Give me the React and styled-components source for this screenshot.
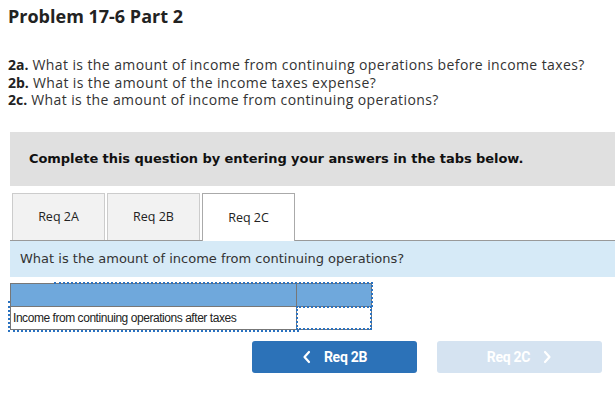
import React from "react";
import styled, { createGlobalStyle } from "styled-components";

const Global = createGlobalStyle`
  body {
    margin: 0;
    background: #fff;
    font-family: "Open Sans", sans-serif;
    color: #222;
  }
`;

const tabs = ["Req 2A", "Req 2B", "Req 2C"];

function App() {
  return (
    <>
      <Global />
      <Page>
        <Title>Problem 17-6 Part 2</Title>
        <Questions>
          <p><b>2a.</b> What is the amount of income from continuing operations before income taxes?</p>
          <p><b>2b.</b> What is the amount of the income taxes expense?</p>
          <p><b>2c.</b> What is the amount of income from continuing operations?</p>
        </Questions>

        <Instructions>Complete this question by entering your answers in the tabs below.</Instructions>

        <TabBar>
          {tabs.map((t) => (
            <Tab key={t} active={t === "Req 2C"}>{t}</Tab>
          ))}
        </TabBar>

        <Prompt>What is the amount of income from continuing operations?</Prompt>

        <Table>
          <HeadRow>
            <HeadCell />
            <HeadCell last />
          </HeadRow>
          <Row>
            <LabelCell>Income from continuing operations after taxes</LabelCell>
            <InputCell />
          </Row>
        </Table>

        <Nav>
          <NavButton>
            <Chevron viewBox="0 0 10 14"><path d="M7 2 L2.5 7 L7 12" /></Chevron>
            Req 2B
          </NavButton>
          <NavButton disabled>
            Req 2C
            <Chevron viewBox="0 0 10 14"><path d="M3 2 L7.5 7 L3 12" /></Chevron>
          </NavButton>
        </Nav>
      </Page>
    </>
  );
}

const Page = styled.div`
  width: 615px;
  padding: 4px 0 0 10px;
  box-sizing: border-box;
`;

const Title = styled.h1`
  margin: 0 0 0 -2px;
  font-size: 18px;
  line-height: 24px;
  font-weight: 700;
  color: #222;
`;

const Questions = styled.div`
  margin-top: 28px;
  margin-left: -2px;
  font-size: 14px;
  line-height: 17.5px;
  letter-spacing: 0.4px;
  color: #333;
  p { margin: 0; }
  b { font-weight: 700; color: #222; letter-spacing: 0; }
`;

const Instructions = styled.div`
  margin-top: 23px;
  height: 54px;
  background: #e0e0e0;
  display: flex;
  align-items: center;
  padding-left: 19px;
  font-family: "DejaVu Sans", Verdana, sans-serif;
  font-size: 13px;
  letter-spacing: -0.06px;
  font-weight: 700;
  color: #111;
`;

const TabBar = styled.div`
  margin-top: 7px;
  display: flex;
  gap: 2px;
  padding-left: 2px;
  border-bottom: 1px solid #999;
  height: 47px;
  align-items: flex-end;
`;

const Tab = styled.div`
  width: 93px;
  box-sizing: border-box;
  display: flex;
  align-items: center;
  justify-content: center;
  border: 1px solid ${(p) => (p.active ? "#aaa" : "#ccc")};
  border-bottom: none;
  background: ${(p) => (p.active ? "#fff" : "#f2f2f2")};
  font-size: 12.5px;
  color: #222;
  margin-bottom: ${(p) => (p.active ? "-1px" : "0")};
  height: ${(p) => (p.active ? "48px" : "47px")};
`;

const Prompt = styled.div`
  height: 36px;
  background: #d6eaf7;
  display: flex;
  align-items: center;
  padding-left: 10px;
  font-family: "DejaVu Sans", Verdana, sans-serif;
  font-size: 13px;
  color: #333;
`;

const Table = styled.div`
  margin-top: 6px;
  width: 362px;
  box-sizing: border-box;
  border: 1px solid #777;
  position: relative;
  &::before {
    content: "";
    position: absolute;
    left: 43px;
    right: -2px;
    top: -2px;
    border-top: 2px dotted #2a72c0;
  }
  &::after {
    content: "";
    position: absolute;
    right: -2px;
    top: -2px;
    height: 25px;
    border-right: 2px dotted #2a72c0;
  }
`;

const HeadRow = styled.div`
  display: grid;
  grid-template-columns: 286px 1fr;
  height: 22px;
  background: #6fa8dc;
`;

const HeadCell = styled.div`
  border-right: ${(p) => (p.last ? "none" : "1px solid #777")};
`;

const Row = styled.div`
  display: grid;
  grid-template-columns: 286px 1fr;
  height: 22px;
  border-top: 1px solid #777;
`;

const LabelCell = styled.div`
  position: relative;
  border-right: 1px solid #777;
  font-family: "Liberation Sans", Arial, sans-serif;
  font-size: 12px;
  letter-spacing: -0.45px;
  color: #222;
  display: flex;
  align-items: center;
  padding-left: 2px;
  &::after {
    content: "";
    position: absolute;
    left: -3px;
    right: -3px;
    top: -6px;
    bottom: -3px;
    border-left: 2px dotted #2a72c0;
    border-bottom: 2px dotted #2a72c0;
    pointer-events: none;
  }
`;

const InputCell = styled.div`
  position: relative;
  &::after {
    content: "";
    position: absolute;
    left: -1px;
    right: -1px;
    top: -1px;
    bottom: -1px;
    border: 2px dotted #2a72c0;
    pointer-events: none;
  }
`;

const Nav = styled.div`
  display: flex;
  justify-content: flex-end;
  gap: 20px;
  padding-right: 13px;
  margin-top: 11px;
`;

const NavButton = styled.button`
  width: 165px;
  height: 32px;
  border: none;
  border-radius: 3px;
  background: ${(p) => (p.disabled ? "#d5e3f1" : "#2c72b8")};
  color: #fff;
  font-family: Roboto, sans-serif;
  font-weight: 700;
  font-size: 14px;
  display: flex;
  align-items: center;
  justify-content: center;
  gap: 12px;
  letter-spacing: -0.3px;
`;

const Chevron = styled.svg`
  width: 10px;
  height: 14px;
  fill: none;
  stroke: #fff;
  stroke-width: 2.2;
  stroke-linecap: round;
  stroke-linejoin: round;
`;

export default App;
